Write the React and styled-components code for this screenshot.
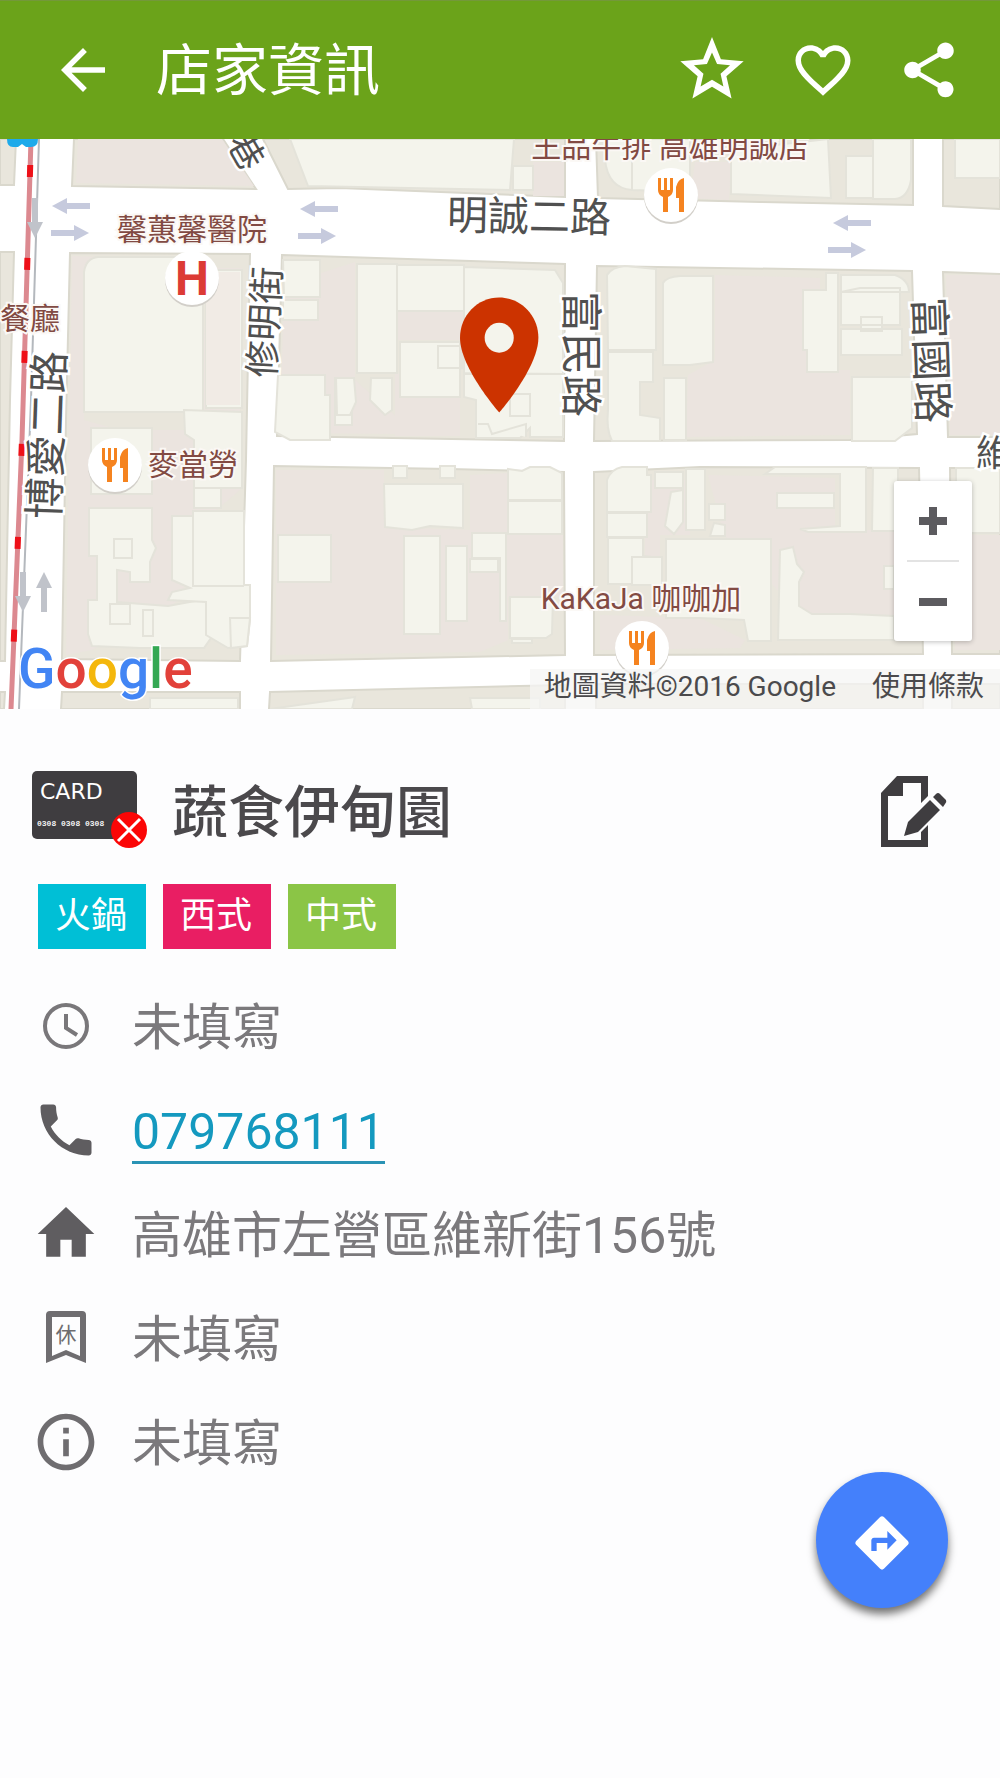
import styled, { createGlobalStyle } from 'styled-components'

const GlobalStyle = createGlobalStyle`
  * {
    box-sizing: border-box;
  }

  body {
    margin: 0;
    background-color: #fdfdfe;
    font-family: Roboto, "Noto Sans CJK TC", sans-serif;
  }

  button {
    padding: 0;
    border: 0;
    background: none;
    cursor: pointer;
  }
`;

const Page = styled.div`
  min-height: 100vh;
`;

const TopBar = styled.header`
  display: flex;
  align-items: center;
  height: 139px;
  padding: 0 38px 0 50px;
  gap: 40px;
  background-color: #6ba31a;
  border-top: 1px solid #74983a;
  color: #ffffff;
`;

const IconButton = styled.button`
  display: flex;
  align-items: center;
  justify-content: center;
  width: ${({ $size }) => $size || 66}px;
  height: ${({ $size }) => $size || 66}px;
  color: inherit;

  svg {
    width: 100%;
    height: 100%;
    fill: currentColor;
  }
`;

const BarTitle = styled.h1`
  flex: 1;
  margin: 0;
  padding-top: 2px;
  font-size: 56px;
  line-height: 64px;
  font-weight: 400;
`;

const MapBox = styled.section`
  position: relative;
`;

const MapSvg = styled.svg`
  display: block;
  width: 100%;
  height: auto;
  background-color: #ffffff;
`;

const ZoomBox = styled.div`
  position: absolute;
  right: 28px;
  bottom: 68px;
  display: flex;
  flex-direction: column;
  align-items: center;
  width: 78px;
  border-radius: 3px;
  background-color: #ffffff;
  box-shadow: 0 1px 5px rgba(0, 0, 0, 0.25);
`;

const ZoomButton = styled.button`
  width: 78px;
  height: 79px;

  svg {
    display: block;
    margin: auto;
    width: 28px;
    height: 28px;
    fill: #5c5b5f;
  }
`;

const ZoomLine = styled.div`
  width: 52px;
  height: 2px;
  background-color: #e3e3e3;
`;

const MapCredits = styled.div`
  position: absolute;
  right: 0;
  bottom: 0;
  display: flex;
  gap: 36px;
  padding: 0 16px 4px 14px;
  background-color: rgba(246, 245, 244, 0.75);
  font-size: 28px;
  line-height: 36px;
  color: #4b4a4c;
`;

const CreditLink = styled.a`
  color: inherit;
  text-decoration: none;
`;

const Content = styled.main`
  padding: 62px 52px 0 32px;
`;

const NameRow = styled.div`
  display: flex;
  align-items: center;
  gap: 24px;
  height: 80px;
`;

const CardIcon = styled.svg`
  width: 116px;
  height: 80px;
`;

const Name = styled.h2`
  flex: 1;
  margin: 0;
  padding-top: 4px;
  font-size: 56px;
  line-height: 64px;
  font-weight: 500;
  color: #4b494c;
`;

const EditButton = styled(IconButton)`
  width: 68px;
  height: 74px;
  color: #3f3d40;
`;

const Tags = styled.ul`
  display: flex;
  gap: 17px;
  margin: 33px 0 0;
  padding: 0 0 0 6px;
  list-style: none;
`;

const Tag = styled.li`
  padding: 0 19px 0 17px;
  background-color: ${({ $color }) => $color};
  color: #ffffff;
  font-size: 36px;
  line-height: 65px;
`;

const InfoList = styled.ul`
  display: flex;
  flex-direction: column;
  gap: 36px;
  margin: 43px 0 0;
  padding: 0;
  list-style: none;
`;

const InfoRow = styled.li`
  display: flex;
  align-items: center;
  gap: 32px;
  min-height: 68px;
  font-size: 50px;
  line-height: 60px;
  color: #7b797c;
`;

const InfoIcon = styled.svg`
  flex: none;
  width: 68px;
  height: 68px;
  fill: ${({ $dark }) => ($dark ? '#5f5d60' : '#6f6d70')};
`;

const InfoText = styled.span`
  padding-top: 4px;
`;

const PhoneLink = styled.a`
  padding-top: 6px;
  border-bottom: 3px solid #2a93b5;
  line-height: 58px;
  color: #1499bf;
  text-decoration: none;
`;

const RouteButton = styled.button`
  position: fixed;
  right: 52px;
  bottom: 170px;
  display: flex;
  align-items: center;
  justify-content: center;
  width: 132px;
  height: 136px;
  border-radius: 50%;
  background-color: #4480fb;
  box-shadow: 0 6px 9px rgba(0, 0, 0, 0.55);

  svg {
    width: 64px;
    height: 64px;
    margin-top: 6px;
    fill: #ffffff;
  }
`;

const blocks = [
  'M0 139H16L14 185H0z',
  'M74 139H223L256 189L72 186z',
  'M263 139L288 189L340 188L565 197V139z',
  'M596 139L598 198L760 202L913 205V139z',
  'M943 139V206L1000 209V139z',
  'M0 252H14L10 400L5 661H0z',
  'M70 253L250 254L246 460L240 661L62 659L66 420z',
  'M282 255L565 264L564 441L277 436z',
  'M597 266L912 271L917 434L850 440L594 441z',
  'M943 272L1000 274V437H948z',
  'M274 466L450 469L564 472L565 655L271 661z',
  'M594 472L700 467L919 468L923 654L594 655z',
  'M950 468H1000V654H952z',
  'M0 692H5L4 709H0z',
  'M62 692H240V709H61z',
  'M270 692L565 685V709H269z',
  'M596 684H923V709H596z',
  'M952 684H1000V709H952z',
];

const yards = [
  'M78 139H222L254 186L76 183z',
  'M72 256L100 257L84 272V420L120 430H240V490L205 520L180 600L92 650L66 655z',
  'M208 268H242L240 420L200 410z',
  'M284 285L355 262V380L400 420V434L280 433z',
  'M398 312H464V340H398zM395 372L460 398V436H395z',
  'M715 275L820 278V300L810 370H850V435L686 437L688 375L715 360z',
  'M946 275H1000V435H950z',
  'M276 470H384V527L470 530V475L508 473V530H563V597H508V640L480 652L276 655z',
  'M708 475L835 478V530H895V615H800L750 560L724 535z',
  'M651 480H690V535H660V560H645V513z',
  'M952 535H1000V650H955z',
  'M600 615L700 618L745 640L740 648L600 650z',
  'M533 162H564V196H533zM695 162H731L729 200L690 198z',
];

const buildings = [
  'M290 139H514L510 190L308 186z',
  'M513 166H533V190H513z',
  'M605 139H632V190Q608 188 605 160zM632 139H690V192L632 190z',
  'M731 150L828 139L831 198L731 194zM846 156H873V198H846zM873 139H911V180Q908 198 895 199H873z',
  'M955 139H1000V178H955z',
  'M98 257H200L214 268L203 270V412H84V272Q86 258 98 257z',
  'M206 270H242V408H206z',
  'M283 260H320V297H284zM283 300H318V320H283z',
  'M278 375H325V395H330V440H290L275 432z',
  'M335 378H352V425H335z',
  'M357 264H397V373H357zM397 265H464V311H397zM464 267L555 270L563 283V374L464 373z',
  'M400 342H460V397H400zM438 346H462V368H438z',
  'M336 378H354L356 402L350 415H337zM371 378H392V410L385 415L370 400z',
  'M464 374H563V437H530V428L520 438H476V400L464 397z',
  'M510 394H530V416H510z',
  'M478 424H488L492 434L526 424V437',
  'M607 275Q612 267 625 266L656 269V350H608zM608 352H653V382H640V415L660 418V435L660 441H612Q606 430 608 410z',
  'M663 283Q666 277 680 276H713V362L690 365L663 365zM664 378H686V440H664z',
  'M803 290H826V273H838V372H807V350H803z',
  'M841 275H895Q909 280 909 292H841zM841 292L860 288H900V325H841zM841 329H902V355H841zM861 317H882V331H861z',
  'M852 377H912V428L895 441H852z',
  'M91 428H152V494H91z',
  'M184 410L242 412V488H194V440L185 434z',
  'M89 508H152V540L156 548L150 562V582H130V572L117 570V602L168 606L206 599L211 638L204 648H140L92 646L88 634V600H97V556H89z',
  'M172 516H193V511H244V585H250V620L247 646L228 648L206 635V602L168 600L172 592L190 588L172 580z',
  'M193 511V586H244',
  'M114 539H132V558H114zM110 604H130V624H110zM143 610H153V636H143z',
  'M194 488H221V508H194z',
  'M230 618H250L247 646L231 648z',
  'M278 535H331V582H278z',
  'M384 484H463V528L430 526L412 530L385 527zM393 466H407V478H393zM440 466H455V478H440z',
  'M404 536H440V634H404zM446 546H467V621H446zM472 533H506V621H500V558H472z',
  'M470 559H498V572H470z',
  'M508 469L522 471L530 467H550L562 473V500H508zM508 501H562V534H508z',
  'M510 597H553L552 634L546 638H510zM512 639H532V643H512z',
  'M607 480Q611 469 622 467H647V475H651V512H607zM607 513H647V537H607zM608 538H643V556L660 558V584H608z',
  'M655 472H683V488H655zM671 492L683 490V522L674 534L665 526zM686 469H705V530H686z',
  'M709 504H725V520H709zM714 523L725 525V536H710z',
  'M632 557H662V585H632z',
  'M666 539H771V641H748L744 620L700 618H666z',
  'M765 474L775 467H866V532H808L800 529L840 526V474zM777 493H834V508H777z',
  'M780 550L793 547L797 564L804 572L799 582V606L812 614H850L894 616V640H778z',
  'M873 468H898V531H872zM884 566H894V589H884z',
  'M956 468H1000V533H956z',
  'M150 698H238V709H150zM355 697L270 709H352zM470 698H540V709H472z',
];

const flatArrows = [
  { x: 52, y: 206, left: true },
  { x: 51, y: 233 },
  { x: 300, y: 209, left: true },
  { x: 298, y: 236 },
  { x: 833, y: 223, left: true },
  { x: 828, y: 250 },
];

const uprightArrows = [
  { x: 44, top: 572, up: true },
  { x: 23, top: 572 },
  { x: 35, top: 198 },
];

const roads = [
  { text: '明誠二路', x: 529, y: 231, size: 41, turn: 'rotate(1 529 216)' },
  { text: '博愛二路', x: 47, y: 450, size: 42, turn: 'rotate(-88 47 435)' },
  { text: '修明街', x: 265, y: 335, size: 37, turn: 'rotate(-87 265 322)' },
  { text: '富民路', x: 581, y: 369, size: 42, turn: 'rotate(90 581 354)' },
  { text: '富國路', x: 931, y: 375, size: 42, turn: 'rotate(88 931 360)' },
  { text: '巷', x: 246, y: 164, size: 36, turn: 'rotate(60 246 151)' },
  { text: '維', x: 994, y: 466, size: 36 },
];

const places = [
  { text: '王品牛排 高雄明誠店', x: 670, y: 157 },
  { text: '馨蕙馨醫院', x: 192, y: 240 },
  { text: '餐廳', x: 30, y: 329 },
  { text: '麥當勞', x: 193, y: 475 },
  { text: 'KaKaJa 咖咖加', x: 641, y: 609 },
];

const restaurants = [
  { x: 115, y: 465 },
  { x: 671, y: 195 },
  { x: 642, y: 648 },
];

const logo = [
  ['G', '#4285f4'],
  ['o', '#e2413a'],
  ['o', '#f4b70c'],
  ['g', '#4285f4'],
  ['l', '#34a853'],
  ['e', '#e2413a'],
];

function Map() {
  return (
    <MapSvg viewBox="0 139 1000 570" role="img" aria-label="地圖">
      <g fill="#e9e6dc" stroke="#dad8cd" strokeWidth="2">
        {blocks.map((d) => <path key={d} d={d} />)}
      </g>
      <g fill="#ebe4df">
        {yards.map((d) => <path key={d} d={d} />)}
      </g>
      <g fill="#f4f4ec" stroke="#e4e3da" strokeWidth="2">
        {buildings.map((d) => <path key={d} d={d} />)}
      </g>
      <path d="M206 272H240V405H206z" fill="#f1ebe5" />

      <path d="M39 139L31 400L19 709" fill="none" stroke="#b4b8bd" strokeWidth="2" />
      <path d="M31 139L22 440L11 709" fill="none" stroke="#dc8990" strokeWidth="5" />
      <path d="M31 139L22 440L11 709" fill="none" stroke="#ee1018" strokeWidth="6" strokeDasharray="12 81" strokeDashoffset="-26" />
      <path d="M7 139H38Q38 147 31 147H26L22 144L18 147H13Q7 147 7 139z" fill="#1eaaea" />

      <g fill="#c6cadd">
        {flatArrows.map(({ x, y, left }) => (
          <path
            key={`${x}-${y}`}
            d="M0 -3H23V-8L38 0L23 8V3H0z"
            transform={left ? `translate(${x + 38} ${y}) scale(-1 1)` : `translate(${x} ${y})`}
          />
        ))}
      </g>
      <g fill="#c0c3ca">
        {uprightArrows.map(({ x, top, up }) => (
          <path
            key={`${x}-${top}`}
            d="M-3 0V24H-8L0 40L8 24H3V0z"
            transform={up ? `translate(${x} ${top + 40}) scale(1 -1)` : `translate(${x} ${top})`}
          />
        ))}
      </g>

      <g fill="#505050" stroke="#ffffff" strokeWidth="5" paintOrder="stroke" textAnchor="middle">
        {roads.map(({ text, x, y, size, turn }) => (
          <text key={text} x={x} y={y} fontSize={size} transform={turn}>{text}</text>
        ))}
      </g>
      <g fill="#824a43" stroke="#fbf8f5" strokeWidth="4" paintOrder="stroke" fontSize="30" textAnchor="middle">
        {places.map(({ text, x, y }) => (
          <text key={text} x={x} y={y}>{text}</text>
        ))}
      </g>

      {restaurants.map(({ x, y }) => (
        <g key={x} transform={`translate(${x} ${y})`}>
          <circle cy="2" r="27" fill="#d2cfc9" />
          <circle r="27" fill="#ffffff" />
          <path d="M-13 -17H-10V-5H-7V-17H-4V-5H-1V-17H2V-5Q2 0 -3 2V17H-8V2Q-13 0 -13 -5z" fill="#f5831f" />
          <path d="M13 -17V17H8V3H5V-8Q7 -16 13 -17z" fill="#f5831f" />
        </g>
      ))}
      <circle cx="192" cy="280" r="27" fill="#d2cfc9" />
      <circle cx="192" cy="278" r="27" fill="#ffffff" />
      <text x="192" y="295" fontSize="48" fontWeight="700" textAnchor="middle" fill="#dc3b35">H</text>

      <g transform="translate(432 286) scale(5.6 5.75)">
        <path d="M12 2C8.13 2 5 5.13 5 9c0 5.25 7 13 7 13s7-7.75 7-13c0-3.87-3.13-7-7-7z" fill="#cc3300" />
        <circle cx="12" cy="9" r="2.6" fill="#f4f4ec" />
      </g>

      <text x="18" y="688" fontSize="55" fontWeight="500" stroke="#ffffff" strokeWidth="3" paintOrder="stroke">
        {logo.map(([letter, color], i) => <tspan key={i} fill={color}>{letter}</tspan>)}
      </text>
    </MapSvg>
  );
}

export default function App() {
  return (
    <Page>
      <GlobalStyle />
      <TopBar>
        <IconButton aria-label="返回">
          <svg viewBox="0 0 24 24"><path d="M20 11H7.83l5.59-5.59L12 4l-8 8 8 8 1.41-1.41L7.83 13H20v-2z" /></svg>
        </IconButton>
        <BarTitle>店家資訊</BarTitle>
        <IconButton $size={76} aria-label="評分">
          <svg viewBox="0 0 24 24"><path d="M12 5L13.7 10H18.6L14.8 13.1L16 18L12 15.3L8 18L9.2 13.1L5.4 10H10.3z" fill="none" /><path d="M22 9.24l-7.19-.62L12 1.6 9.19 8.63 2 9.24l5.46 4.73L5.82 21 12 17.27 18.18 21l-1.63-7.03L22 9.24zM12 15.1l-3.6 2.1 .9-4-3-2.7 4.1-.4L12 6.5l1.6 3.6 4.1.4-3 2.7.9 4L12 15.1z" /></svg>
        </IconButton>
        <IconButton aria-label="收藏">
          <svg viewBox="0 0 24 24"><path d="M16.5 3c-1.74 0-3.41.81-4.5 2.09C10.91 3.81 9.24 3 7.5 3 4.42 3 2 5.42 2 8.5c0 3.78 3.4 6.86 8.55 11.54L12 21.35l1.45-1.32C18.6 15.36 22 12.28 22 8.5 22 5.42 19.58 3 16.5 3zm-4.4 15.55l-.1.1-.1-.1C7.14 14.24 4 11.39 4 8.5 4 6.5 5.5 5 7.5 5c1.54 0 3.04.99 3.57 2.36h1.87C13.46 5.99 14.96 5 16.5 5c2 0 3.5 1.5 3.5 3.5 0 2.89-3.14 5.74-7.9 10.05z" /></svg>
        </IconButton>
        <IconButton aria-label="分享">
          <svg viewBox="0 0 24 24"><path d="M18 16.08c-.76 0-1.44.3-1.96.77L8.91 12.7c.05-.23.09-.46.09-.7s-.04-.47-.09-.7l7.05-4.11c.54.5 1.25.81 2.04.81 1.66 0 3-1.34 3-3s-1.34-3-3-3-3 1.34-3 3c0 .24.04.47.09.7L8.04 9.81C7.5 9.31 6.79 9 6 9c-1.66 0-3 1.34-3 3s1.34 3 3 3c.79 0 1.5-.31 2.04-.81l7.12 4.16c-.05.21-.08.43-.08.65 0 1.61 1.31 2.92 2.92 2.92s2.92-1.31 2.92-2.92-1.31-2.92-2.92-2.92z" /></svg>
        </IconButton>
      </TopBar>

      <MapBox>
        <Map />
        <MapCredits>
          <span>地圖資料©2016 Google</span>
          <CreditLink href="#terms">使用條款</CreditLink>
        </MapCredits>
        <ZoomBox>
          <ZoomButton aria-label="放大">
            <svg viewBox="0 0 28 28"><path d="M10 0h8v10h10v8H18v10h-8V18H0v-8h10z" /></svg>
          </ZoomButton>
          <ZoomLine />
          <ZoomButton aria-label="縮小">
            <svg viewBox="0 0 28 28"><path d="M0 10h28v8H0z" /></svg>
          </ZoomButton>
        </ZoomBox>
      </MapBox>

      <Content>
        <NameRow>
          <CardIcon viewBox="0 0 116 80" role="img" aria-label="不可刷卡">
            <rect x="0" y="0" width="105" height="68" rx="5" fill="#3f3d40" />
            <text x="8" y="28" fontFamily="DejaVu Sans" fontSize="22" fill="#ffffff">CARD</text>
            <text x="5" y="55" fontFamily="Liberation Mono" fontWeight="700" fontSize="8" fill="#f2f2f2">0308 0308 0308</text>
            <circle cx="97" cy="59" r="18" fill="#fb0606" />
            <path d="M86 48L108 70M108 48L86 70" stroke="#ffffff" strokeWidth="3" />
          </CardIcon>
          <Name>蔬食伊甸園</Name>
          <EditButton aria-label="編輯">
            <svg viewBox="0 0 68 74">
              <path fillRule="evenodd" d="M17 2H48V22L41 29V9H23V22H8V66H41V58L48 51V73H1V19z" />
              <path d="M24 62L28 48L50 26L60 36L38 58zM53 23L56 20Q58 18 60 20L66 26Q67 28 65 30L63 33z" />
            </svg>
          </EditButton>
        </NameRow>

        <Tags>
          <Tag $color="#00bfd6">火鍋</Tag>
          <Tag $color="#e91e63">西式</Tag>
          <Tag $color="#8bc546">中式</Tag>
        </Tags>

        <InfoList>
          <InfoRow>
            <InfoIcon viewBox="0 0 68 68">
              <circle cx="34" cy="34" r="21" fill="none" stroke="#79777a" strokeWidth="4" />
              <path d="M34 22V36L45 43" fill="none" stroke="#79777a" strokeWidth="4" />
            </InfoIcon>
            <InfoText>未填寫</InfoText>
          </InfoRow>
          <InfoRow>
            <InfoIcon $dark viewBox="0 0 24 24">
              <path d="M6.62 10.79c1.44 2.83 3.76 5.14 6.59 6.59l2.2-2.2c.27-.27.67-.36 1.02-.24 1.12.37 2.33.57 3.57.57.55 0 1 .45 1 1V20c0 .55-.45 1-1 1-9.39 0-17-7.61-17-17 0-.55.45-1 1-1h3.5c.55 0 1 .45 1 1 0 1.25.2 2.45.57 3.57.11.35.03.74-.25 1.02l-2.2 2.2z" />
            </InfoIcon>
            <PhoneLink href="tel:079768111">079768111</PhoneLink>
          </InfoRow>
          <InfoRow>
            <InfoIcon $dark viewBox="0 0 24 24"><path d="M10 20v-6h4v6h5v-8h3L12 2.5 2 12h3v8z" /></InfoIcon>
            <InfoText>高雄市左營區維新街156號</InfoText>
          </InfoRow>
          <InfoRow>
            <InfoIcon viewBox="0 0 68 68">
              <path fillRule="evenodd" d="M14 59V11Q14 7 18 7H50Q54 7 54 11V59L34 51zM20 52L34 46L48 52V13H20z" />
              <text x="34" y="38" fontSize="21" textAnchor="middle">休</text>
            </InfoIcon>
            <InfoText>未填寫</InfoText>
          </InfoRow>
          <InfoRow>
            <InfoIcon viewBox="0 0 24 24"><path d="M11 17h2v-6h-2v6zm1-15C6.48 2 2 6.48 2 12s4.48 10 10 10 10-4.48 10-10S17.52 2 12 2zm0 18c-4.41 0-8-3.59-8-8s3.59-8 8-8 8 3.59 8 8-3.59 8-8 8zM11 9h2V7h-2v2z" /></InfoIcon>
            <InfoText>未填寫</InfoText>
          </InfoRow>
        </InfoList>
      </Content>

      <RouteButton aria-label="路線">
        <svg viewBox="0 0 24 24"><path d="M21.71 11.29l-9-9c-.39-.39-1.02-.39-1.41 0l-9 9c-.39.39-.39 1.02 0 1.41l9 9c.39.39 1.02.39 1.41 0l9-9c.39-.38.39-1.01 0-1.41zM14 14.5V12h-4v3H8v-4c0-.55.45-1 1-1h5V7.5l3.5 3.5-3.5 3.5z" /></svg>
      </RouteButton>
    </Page>
  );
}
